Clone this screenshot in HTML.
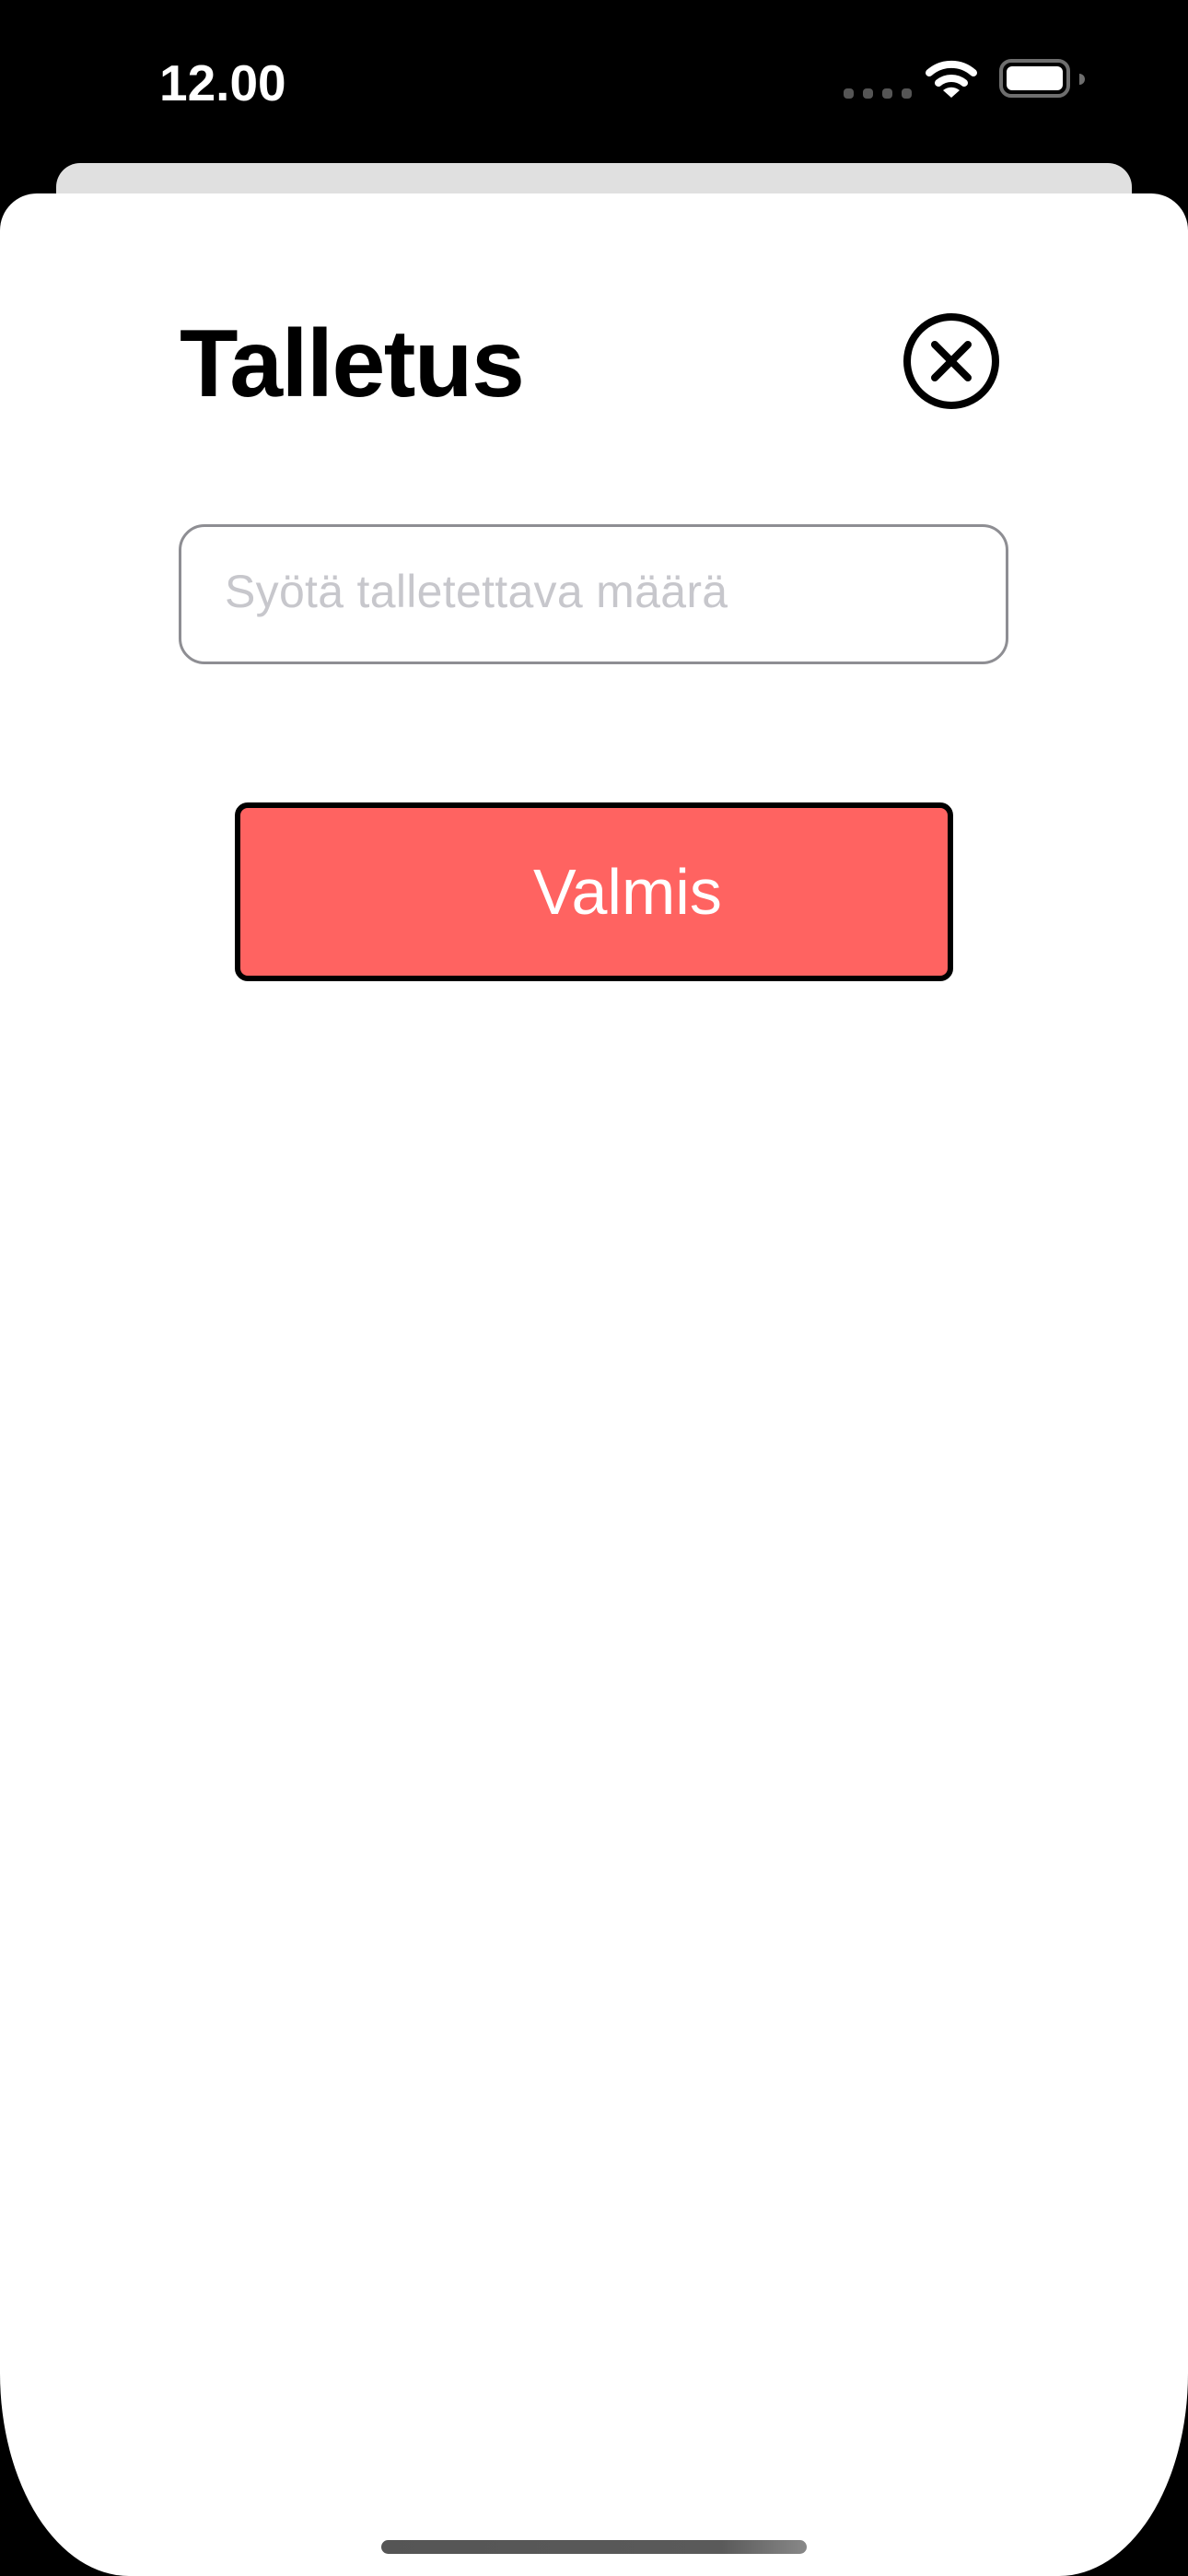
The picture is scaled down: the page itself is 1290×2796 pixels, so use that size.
<!DOCTYPE html>
<html><head><meta charset="utf-8"><style>
*{margin:0;padding:0;box-sizing:border-box}
html,body{width:1290px;height:2796px;background:#000;overflow:hidden;font-family:"Liberation Sans",sans-serif}
.abs{position:absolute}
</style></head><body>
<div class="abs" style="left:173px;top:58px;font-size:55px;font-weight:bold;color:#fff;letter-spacing:0px">12.00</div>
<svg class="abs" style="left:0;top:0" width="1290" height="120">
<g fill="#555"><rect x="916" y="96" width="11" height="11" rx="4"/><rect x="937" y="96" width="11" height="11" rx="4"/><rect x="958" y="96" width="11" height="11" rx="4"/><rect x="979" y="96" width="11" height="11" rx="4"/></g>
<g fill="none" stroke="#fff" stroke-width="8" stroke-linecap="round">
<path d="M1009 79 A36 36 0 0 1 1057 79"/><path d="M1019 90 A22 22 0 0 1 1047 90"/></g>
<path d="M1024 98 L1033 106 L1042 98 A14 14 0 0 0 1024 98Z" fill="#fff"/>
<rect x="1087" y="66" width="73" height="38" rx="11" fill="none" stroke="#6e6e6e" stroke-width="4"/>
<rect x="1093" y="72" width="61" height="26" rx="6" fill="#fff"/>
<path d="M1172 80 a6 6 0 0 1 0 12z" fill="#6e6e6e"/>
</svg>
<div class="abs" style="left:61px;top:177px;width:1168px;height:80px;background:#e0e0e0;border-radius:26px 26px 0 0"></div>
<div class="abs" style="left:0;top:210px;width:1290px;height:2586px;background:#fff;border-radius:40px 40px 140px 140px / 40px 40px 220px 220px"></div>
<div class="abs" style="left:195px;top:335px;font-size:104px;font-weight:bold;color:#000;letter-spacing:-1.5px;line-height:120px">Talletus</div>
<svg class="abs" style="left:975px;top:334px" width="116" height="116">
<circle cx="58" cy="58" r="48" fill="none" stroke="#000" stroke-width="8"/>
<path d="M40 40 L76 76 M76 40 L40 76" stroke="#000" stroke-width="8" stroke-linecap="round"/>
</svg>
<div class="abs" style="left:194px;top:569px;width:901px;height:152px;border:3px solid #8e8e93;border-radius:28px"></div>
<div class="abs" style="left:244px;top:612px;font-size:50px;color:#c7c7cc;line-height:60px;letter-spacing:0.3px">Syötä talletettava määrä</div>
<div class="abs" style="left:255px;top:871px;width:780px;height:194px;background:#ff6361;border:6px solid #000;border-radius:14px;color:#fff;font-size:70px;line-height:182px;padding-left:318px">Valmis</div>
<div class="abs" style="left:414px;top:2757px;width:462px;height:15px;border-radius:8px;background:linear-gradient(90deg,#555,#5a5a5a 80%,#888)"></div>
</body></html>
